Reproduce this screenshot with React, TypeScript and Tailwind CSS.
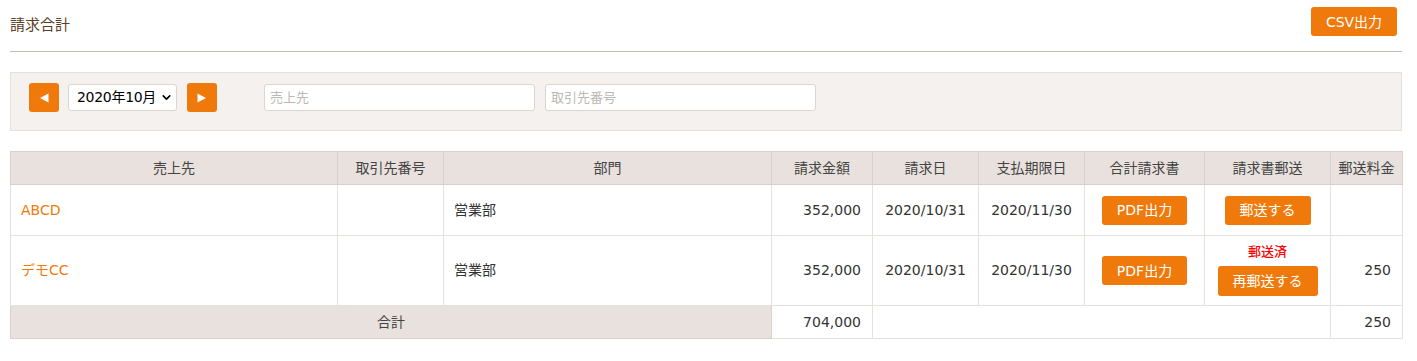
import { ChevronDown } from "lucide-react";

type Row = {
    name: string,
    code: string,
    dept: string,
    amount: string,
    billed: string,
    due: string,
    mailed: boolean,
    postage: string,
}

const rows: Row[] = [
    { name: "ABCD", code: "", dept: "営業部", amount: "352,000", billed: "2020/10/31", due: "2020/11/30", mailed: false, postage: "" },
    { name: "デモCC", code: "", dept: "営業部", amount: "352,000", billed: "2020/10/31", due: "2020/11/30", mailed: true, postage: "250" },
]

const headers = ["売上先", "取引先番号", "部門", "請求金額", "請求日", "支払期限日", "合計請求書", "請求書郵送", "郵送料金"]
const widths = [327, 106, 328, 101, 106, 106, 120, 126, 72]

const font = { fontFamily: '"DejaVu Sans", "Noto Sans CJK JP", sans-serif' }

function OrangeButton({ label, className }: { label: string, className: string }) {
    return <button className={`bg-[#ef7a0b] text-white text-[14px] rounded-[3px] flex items-center justify-center leading-none whitespace-nowrap ${className}`}>{label}</button>
}

function Arrow({ dir }: { dir: "left" | "right" }) {
    return <button className="w-[30px] h-[29px] bg-[#ef7a0b] rounded-[3px] flex items-center justify-center">
        <svg width="10" height="10" viewBox="0 0 10 10">
            {dir === "left" ? <polygon points="9.5,0.5 9.5,9.5 1,5" fill="#fff" /> : <polygon points="0.5,0.5 0.5,9.5 9,5" fill="#fff" />}
        </svg>
    </button>
}

export default function App() {
    const td = "border border-[#e6e1dd] text-[14px] text-[#333]"
    return <div className="bg-white w-[1417px] h-[361px] px-[10px] pr-[15px]" style={font}>
        <div className="h-[52px] flex items-start justify-between border-b border-[#c4bcb6]">
            <div className="text-[15px] text-[#5b3f28] mt-[14px]">請求合計</div>
            <OrangeButton label="CSV出力" className="w-[86px] h-[29px] mt-[7px] mr-[5px]" />
        </div>
        <div className="mt-[20px] h-[59px] bg-[#f5f1ee] border border-[#e5e0dc] flex items-start pt-[10px] pl-[18px]">
            <Arrow dir="left" />
            <div className="ml-[9px] mt-[1px] w-[109px] h-[27px] bg-white border border-[#ddd6d0] rounded-[3px] flex items-center justify-between pl-[8px] pr-[3px] text-[14px] text-black whitespace-nowrap tracking-[-0.3px]">
                <span>2020年10月</span>
                <ChevronDown size={13} strokeWidth={3} className="shrink-0" />
            </div>
            <div className="ml-[10px]"><Arrow dir="right" /></div>
            <div className="ml-[47px] mt-[1px] w-[271px] h-[27px] bg-white border border-[#ddd6d0] rounded-[3px] flex items-center pl-[5px] text-[13px] text-[#bdb8b4]">売上先</div>
            <div className="ml-[10px] mt-[1px] w-[271px] h-[27px] bg-white border border-[#ddd6d0] rounded-[3px] flex items-center pl-[5px] text-[13px] text-[#bdb8b4]">取引先番号</div>
        </div>
        <table className="mt-[20px] w-[1392px] table-fixed border-collapse border border-[#d8d0ca]">
            <colgroup>
                {widths.map((w, i) => <col key={i} style={{ width: w }} />)}
            </colgroup>
            <thead>
                <tr className="h-[33px] bg-[#e8e1dd]">
                    {headers.map(h => <th key={h} className="border border-[#d8d0ca] font-normal text-[14px] text-[#444]">{h}</th>)}
                </tr>
            </thead>
            <tbody>
                {rows.map((r, i) => <tr key={i} className={r.mailed ? "h-[70px]" : "h-[51px]"}>
                    <td className={`${td} pl-[10px] text-[#ef7a0b]`}>{r.name}</td>
                    <td className={td}>{r.code}</td>
                    <td className={`${td} pl-[10px]`}>{r.dept}</td>
                    <td className={`${td} text-right pr-[11px]`}>{r.amount}</td>
                    <td className={`${td} text-center`}>{r.billed}</td>
                    <td className={`${td} text-center`}>{r.due}</td>
                    <td className={td}>
                        <div className="flex justify-center"><OrangeButton label="PDF出力" className="w-[85px] h-[29px]" /></div>
                    </td>
                    <td className={`${td} ${r.mailed ? "align-top pt-[9px]" : ""}`}>
                        {r.mailed ? <div className="flex flex-col items-center">
                            <div className="text-[13px] font-medium text-[#f00] leading-none">郵送済</div>
                            <OrangeButton label="再郵送する" className="w-[100px] h-[30px] mt-[8px]" />
                        </div> : <div className="flex justify-center"><OrangeButton label="郵送する" className="w-[86px] h-[29px]" /></div>}
                    </td>
                    <td className={`${td} text-right pr-[11px]`}>{r.postage}</td>
                </tr>)}
                <tr className="h-[33px]">
                    <td colSpan={3} className="border border-[#d8d0ca] bg-[#e8e1dd] text-center text-[14px] text-[#444]">合計</td>
                    <td className={`${td} text-right pr-[11px]`}>704,000</td>
                    <td colSpan={4} className={td}></td>
                    <td className={`${td} text-right pr-[11px]`}>250</td>
                </tr>
            </tbody>
        </table>
    </div>
}
